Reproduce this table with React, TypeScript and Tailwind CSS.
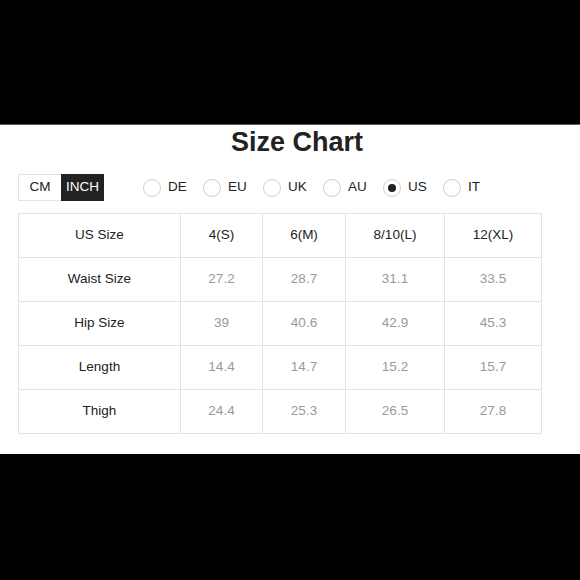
import React from "react";

const font = { fontFamily: '"Liberation Sans", Arial, sans-serif' };

const cols = ["162px", "82px", "83px", "99px", "97px"];
const header = ["US Size", "4(S)", "6(M)", "8/10(L)", "12(XL)"];
const rows: [string, string[]][] = [
  ["Waist Size", ["27.2", "28.7", "31.1", "33.5"]],
  ["Hip Size", ["39", "40.6", "42.9", "45.3"]],
  ["Length", ["14.4", "14.7", "15.2", "15.7"]],
  ["Thigh", ["24.4", "25.3", "26.5", "27.8"]],
];
const regions = ["DE", "EU", "UK", "AU", "US", "IT"];

export default function App() {
  return (
    <div className="w-[580px] h-[580px] bg-black flex flex-col" style={font}>
      <div className="h-[124px] bg-black" />
      <div className="h-px bg-[#5c5c5c]" />
      <div className="h-[329px] bg-white flex flex-col">
        <div className="pt-[2px] h-[32px] flex justify-center pl-[14px]">
          <h1 className="text-[27px] leading-[30px] font-bold text-[#222]">Size Chart</h1>
        </div>
        <div className="mt-[17px] h-[27px] flex items-center pl-[18px]">
          <div className="flex h-[27px] text-[13.5px]">
            <div className="w-[43px] h-[27px] border border-[#e3e3e3] border-r-0 flex items-center justify-center text-[#222]">
              CM
            </div>
            <div className="w-[43px] h-[27px] bg-[#222] flex items-center justify-center text-white">
              INCH
            </div>
          </div>
          <div className="flex ml-[39px]">
            {regions.map((r) => (
              <div key={r} className="w-[60px] flex items-center gap-[7px]">
                <div className="w-[18px] h-[18px] rounded-full border border-[#cfcfcf] flex items-center justify-center">
                  {r === "US" && <div className="w-[8px] h-[8px] rounded-full bg-[#222]" />}
                </div>
                <span className="text-[13.5px] text-[#222]">{r}</span>
              </div>
            ))}
          </div>
        </div>
        <div className="mt-[12px] ml-[18px]">
          <div
            className="grid border-l border-t border-[#e3e3e3] w-max"
            style={{ gridTemplateColumns: cols.join(" ") }}
          >
            {header.map((h) => (
              <div
                key={h}
                className="h-[44px] border-r border-b border-[#e3e3e3] flex items-center justify-center text-[13.5px] text-[#222]"
              >
                {h}
              </div>
            ))}
            {rows.map(([label, vals]) => (
              <React.Fragment key={label}>
                <div className="h-[44px] border-r border-b border-[#e3e3e3] flex items-center justify-center text-[13.5px] text-[#222]">
                  {label}
                </div>
                {vals.map((v, i) => (
                  <div
                    key={i}
                    className="h-[44px] border-r border-b border-[#e3e3e3] flex items-center justify-center text-[13.5px] text-[#999]"
                  >
                    {v}
                  </div>
                ))}
              </React.Fragment>
            ))}
          </div>
        </div>
      </div>
      <div className="flex-1 bg-black" />
    </div>
  );
}
